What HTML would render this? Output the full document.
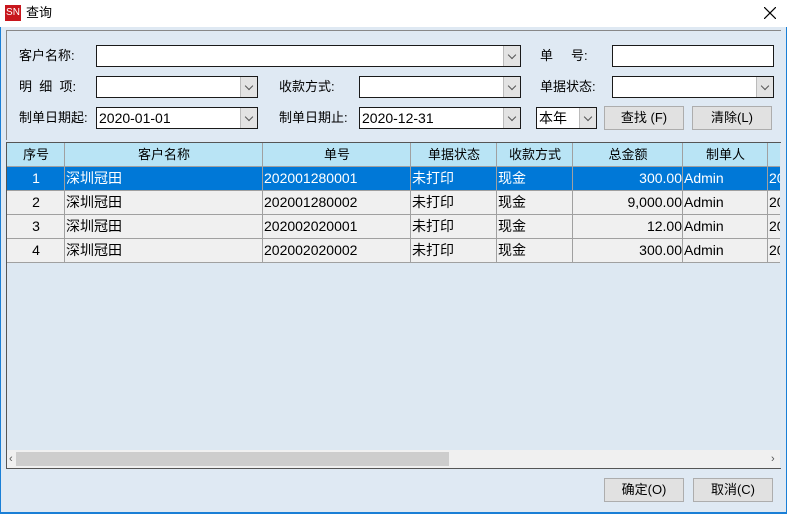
<!DOCTYPE html><html><head><meta charset="utf-8"><style>
*{margin:0;padding:0;box-sizing:border-box}
body{width:787px;height:514px;position:relative;background:#dfe9f3;font-family:"Liberation Sans","Noto Sans CJK SC",sans-serif;font-size:13px;color:#000;overflow:hidden}
.a{position:absolute}
.lbl{position:absolute;font-size:13px;line-height:20px}
.in{position:absolute;background:#fff;border:1px solid #1a1a1a;height:22px;font-size:14px;line-height:20px;padding-left:2px}
.dd{position:absolute;right:0;top:0;width:17px;height:20px;background:#e3e3e3;border-left:1px solid #bbb}
.dd:after{content:"";position:absolute;left:5px;top:6px;width:5px;height:5px;border-right:1px solid #555;border-bottom:1px solid #555;transform:rotate(45deg)}
.btn{position:absolute;background:#e1e1e1;border:1px solid #adadad;text-align:center;font-size:13px;line-height:22px;height:24px}
.row{position:absolute;left:7px;width:773px;height:24px;background:#f0f0f0;border-bottom:1px solid #a0a0a0;font-size:14px;line-height:23px}
.c{position:absolute;top:0;height:100%;border-right:1px solid #a0a0a0;white-space:nowrap;overflow:hidden;padding-left:1px}
.sel{background:#0078d7;color:#fff}
</style></head><body>
<div class="a" style="left:0;top:0;width:787px;height:27px;background:#fff"></div>
<div class="a" style="left:5px;top:5px;width:16px;height:16px;background:#c8161d;color:#fff;font-size:10px;line-height:16px;text-align:center">SN</div>
<div class="lbl" style="left:26px;top:3px">查询</div>
<svg class="a" style="left:764px;top:7px" width="12" height="12"><path d="M0 0L12 12M12 0L0 12" stroke="#000" stroke-width="1.2"/></svg>
<div class="a" style="left:0;top:27px;width:1px;height:487px;background:#1a7fd6"></div>
<div class="a" style="left:786px;top:27px;width:1px;height:487px;background:#1a7fd6"></div>
<div class="a" style="left:0;top:512px;width:787px;height:2px;background:#1a7fd6"></div>
<div class="a" style="left:6px;top:30px;width:775px;height:110px;border:1px solid #888;border-bottom:none;border-right:none"></div>

<div class="lbl" style="left:19px;top:46px">客户名称:</div>
<div class="in" style="left:96px;top:45px;width:425px"><div class="dd"></div></div>
<div class="lbl" style="left:540px;top:46px">单&nbsp;&nbsp;&nbsp;&nbsp;&nbsp;号:</div>
<div class="in" style="left:612px;top:45px;width:162px"></div>

<div class="lbl" style="left:19px;top:77px">明&nbsp;&nbsp;细&nbsp;&nbsp;项:</div>
<div class="in" style="left:96px;top:76px;width:162px"><div class="dd"></div></div>
<div class="lbl" style="left:279px;top:77px">收款方式:</div>
<div class="in" style="left:359px;top:76px;width:162px"><div class="dd"></div></div>
<div class="lbl" style="left:540px;top:77px">单据状态:</div>
<div class="in" style="left:612px;top:76px;width:162px"><div class="dd"></div></div>

<div class="lbl" style="left:19px;top:108px">制单日期起:</div>
<div class="in" style="left:96px;top:107px;width:162px">2020-01-01<div class="dd"></div></div>
<div class="lbl" style="left:279px;top:108px">制单日期止:</div>
<div class="in" style="left:359px;top:107px;width:162px">2020-12-31<div class="dd"></div></div>
<div class="in" style="left:536px;top:107px;width:61px">本年<div class="dd"></div></div>
<div class="btn" style="left:604px;top:106px;width:80px">查找 (F)</div>
<div class="btn" style="left:692px;top:106px;width:80px">清除(L)</div>

<div class="a" style="left:6px;top:142px;width:775px;height:327px;border:1px solid #555;border-right:none;background:#dde8f2"></div>
<div class="row" style="top:143px;background:#b9e4f5;text-align:center;font-size:13px">
<div class="c" style="left:0;width:58px">序号</div><div class="c" style="left:58px;width:198px">客户名称</div><div class="c" style="left:256px;width:148px">单号</div><div class="c" style="left:404px;width:86px">单据状态</div><div class="c" style="left:490px;width:76px">收款方式</div><div class="c" style="left:566px;width:110px">总金额</div><div class="c" style="left:676px;width:85px">制单人</div></div>
<div class="row sel" style="top:167px">
<div class="c" style="left:0;width:58px;text-align:center">1</div><div class="c" style="left:58px;width:198px">深圳冠田</div><div class="c" style="left:256px;width:148px">202001280001</div><div class="c" style="left:404px;width:86px">未打印</div><div class="c" style="left:490px;width:76px">现金</div><div class="c" style="left:566px;width:110px;text-align:right">300.00</div><div class="c" style="left:676px;width:85px">Admin</div><div class="c" style="left:761px;width:12px;border:none">20</div></div>
<div class="row" style="top:191px">
<div class="c" style="left:0;width:58px;text-align:center">2</div><div class="c" style="left:58px;width:198px">深圳冠田</div><div class="c" style="left:256px;width:148px">202001280002</div><div class="c" style="left:404px;width:86px">未打印</div><div class="c" style="left:490px;width:76px">现金</div><div class="c" style="left:566px;width:110px;text-align:right">9,000.00</div><div class="c" style="left:676px;width:85px">Admin</div><div class="c" style="left:761px;width:12px;border:none">20</div></div>
<div class="row" style="top:215px">
<div class="c" style="left:0;width:58px;text-align:center">3</div><div class="c" style="left:58px;width:198px">深圳冠田</div><div class="c" style="left:256px;width:148px">202002020001</div><div class="c" style="left:404px;width:86px">未打印</div><div class="c" style="left:490px;width:76px">现金</div><div class="c" style="left:566px;width:110px;text-align:right">12.00</div><div class="c" style="left:676px;width:85px">Admin</div><div class="c" style="left:761px;width:12px;border:none">20</div></div>
<div class="row" style="top:239px">
<div class="c" style="left:0;width:58px;text-align:center">4</div><div class="c" style="left:58px;width:198px">深圳冠田</div><div class="c" style="left:256px;width:148px">202002020002</div><div class="c" style="left:404px;width:86px">未打印</div><div class="c" style="left:490px;width:76px">现金</div><div class="c" style="left:566px;width:110px;text-align:right">300.00</div><div class="c" style="left:676px;width:85px">Admin</div><div class="c" style="left:761px;width:12px;border:none">20</div></div>

<div class="a" style="left:7px;top:450px;width:773px;height:18px;background:#f0f0f0"></div>
<div class="a" style="left:16px;top:452px;width:433px;height:14px;background:#cdcdcd"></div>
<div class="lbl" style="left:9px;top:449px;font-size:11px;color:#555">‹</div>
<div class="lbl" style="left:771px;top:449px;font-size:11px;color:#555">›</div>

<div class="btn" style="left:604px;top:478px;width:80px">确定(O)</div>
<div class="btn" style="left:693px;top:478px;width:80px">取消(C)</div>
</body></html>
